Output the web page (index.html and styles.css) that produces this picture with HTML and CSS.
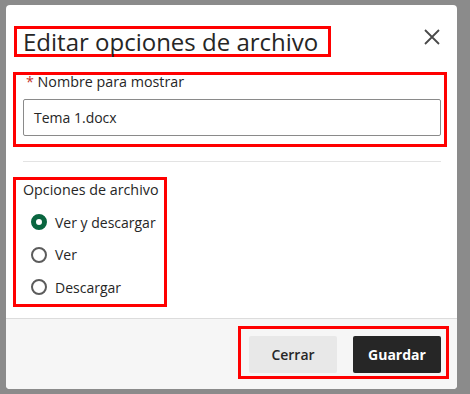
FILE: index.html
```html
<!DOCTYPE html>
<html lang="es">
<head>
<meta charset="utf-8">
<link rel="stylesheet" href="styles.css">
</head>
<body>
<div class="dialog">
  <div class="header">
    <h1 class="title hl">Editar opciones de archivo</h1>
    <button class="close" aria-label="Cerrar">
      <svg width="16" height="16" viewBox="0 0 16 16"><path d="M1 1L15 15M15 1L1 15" stroke="#4a4a4a" stroke-width="1.8" fill="none"/></svg>
    </button>
  </div>
  <div class="content">
    <div class="field hl">
      <label class="label"><span class="req">*</span> Nombre para mostrar</label>
      <div class="input">Tema 1.docx</div>
    </div>
    <div class="sep"></div>
    <div class="options hl">
      <div class="legend">Opciones de archivo</div>
      <div class="radio"><span class="dot checked"></span><span>Ver y descargar</span></div>
      <div class="radio"><span class="dot"></span><span>Ver</span></div>
      <div class="radio"><span class="dot"></span><span>Descargar</span></div>
    </div>
  </div>
  <div class="footer">
    <div class="actions hl">
      <button class="btn secondary">Cerrar</button>
      <button class="btn primary">Guardar</button>
    </div>
  </div>
</div>
</body>
</html>
```
FILE: styles.css
```css
html, body {
  margin: 0;
  padding: 0;
}
body {
  width: 470px;
  height: 394px;
  background: #8b8b8b;
  font-family: "Open Sans", "Noto Sans", sans-serif;
  color: #262626;
  overflow: hidden;
}
.dialog {
  margin: 5px 0 0 6px;
  width: 451px;
  height: 384px;
  background: #fff;
  border-radius: 4px;
  display: flex;
  flex-direction: column;
  overflow: hidden;
}
.hl {
  border: 3px solid #f00;
  box-sizing: border-box;
}
.header {
  display: flex;
  justify-content: space-between;
  align-items: flex-start;
  padding: 21px 17px 0 8px;
}
.title {
  margin: 0;
  font-size: 24px;
  font-weight: 400;
  line-height: 25px;
  padding: 0 10px 0 6px;
  color: #262626;
}
.close {
  border: 0;
  background: none;
  padding: 0;
  margin-top: 3px;
  width: 16px;
  height: 16px;
  display: flex;
}
.content {
  padding: 15px 10px 0 7px;
  flex: 1;
}
.field {
  padding: 0 3px 8px 7px;
}
.label {
  display: block;
  font-size: 14.3px;
  line-height: 14px;
  padding-left: 3px;
  color: #262626;
}
.req {
  color: #c4332b;
}
.input {
  margin-top: 10px;
  height: 37px;
  box-sizing: border-box;
  border: 1px solid #8a8a8a;
  border-radius: 2px;
  padding-left: 10px;
  font-size: 14px;
  line-height: 35px;
  color: #262626;
}
.sep {
  height: 1px;
  background: #e3e3e3;
  margin: 14px 6px 15px 10px;
}
.options {
  width: 154px;
  padding: 3px 0 0 7px;
}
.legend {
  font-size: 14.3px;
  line-height: 14px;
  margin-bottom: 9px;
  white-space: nowrap;
}
.radio {
  display: flex;
  align-items: center;
  height: 32.5px;
  padding-left: 8px;
  gap: 8px;
  font-size: 14px;
}
.dot {
  width: 16px;
  height: 16px;
  box-sizing: border-box;
  border: 2px solid #5c5c5c;
  border-radius: 50%;
  background: #fff;
}
.dot.checked {
  border: 5px solid #0a6640;
}
.footer {
  border-top: 1px solid #dcdcdc;
  background: #f6f6f6;
  height: 71px;
  box-sizing: border-box;
  display: flex;
  justify-content: flex-end;
  align-items: flex-start;
  padding: 7px 8px 0 0;
}
.actions {
  display: flex;
  gap: 16px;
  padding: 7px 5px 3px 8px;
}
.btn {
  width: 88px;
  height: 37px;
  border: 0;
  border-radius: 2px;
  font-family: "Open Sans", "Noto Sans", sans-serif;
  font-size: 14px;
  padding: 0;
}
.secondary {
  background: #e8e8e8;
  color: #262626;
  font-weight: 600;
}
.primary {
  background: #262626;
  color: #fff;
  font-weight: 700;
}
```
